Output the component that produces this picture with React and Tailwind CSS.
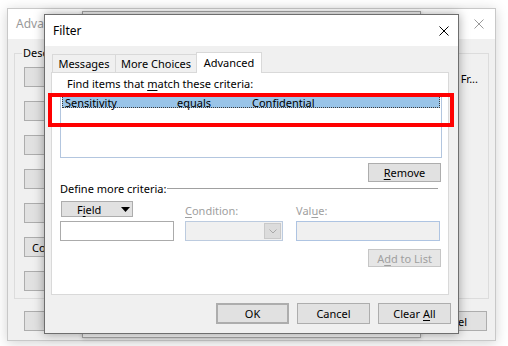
import React from "react"

const CloseX = ({ color = "#000" }) => (
  <svg width="10" height="10" viewBox="0 0 10 10">
    <path d="M0.5 0.5 L9.5 9.5 M9.5 0.5 L0.5 9.5" stroke={color} strokeWidth="1" fill="none" />
  </svg>
)

const Btn = ({ children, className = "" }) => (
  <div
    className={`flex items-center justify-center border border-[#adadad] bg-[#e1e1e1] leading-none ${className}`}
  >
    {children}
  </div>
)

const Tab = ({ label, active, width }) =>
  active ? (
    <div
      className={`relative z-10 -mb-px -ml-px flex h-[21px] items-start justify-center border border-b-0 border-[#d9d9d9] bg-white pt-[2px] ${width}`}
    >
      {label}
    </div>
  ) : (
    <div
      className={`-ml-px flex h-[18px] items-start justify-center border border-b-0 border-[#d9d9d9] bg-[#f0f0f0] pt-[1px] first:ml-0 ${width}`}
    >
      {label}
    </div>
  )

// window in the back, mostly covered by the filter dialog
const BackDialog = () => (
  <div className="absolute left-[7px] top-[8px] flex h-[333px] w-[489px] flex-col border border-[#c8c8c8] bg-[#f0f0f0] shadow-[0_2px_12px_rgba(0,0,0,0.18)]">
    <div className="flex h-[30px] items-center justify-between bg-white pl-[8px] pr-[11px] text-[12px] text-[#9a9a9a]">
      <span>Adva</span>
      <CloseX color="#9a9a9a" />
    </div>
    <div className="flex flex-1 flex-col px-[6px] pt-[14px]">
      <div className="relative flex h-[246px] justify-between border border-[#dcdcdc] pl-[9px] pr-[10px] pt-[13px]">
        <span className="absolute -top-[9px] left-[7px] bg-[#f0f0f0] px-[1px]">Desc</span>
        <div className="flex flex-col gap-[14px]">
          {["", "", "", "", "", "Co", ""].map((t, i) => (
            <Btn key={i} className={`h-[20px] w-[75px] ${t ? "justify-start pl-[7px]" : ""}`}>
              {t}
            </Btn>
          ))}
        </div>
        <div className="pt-[4px]">Fr...</div>
      </div>
      <div className="mt-[12px] flex justify-between pl-[10px] pr-[2px]">
        <Btn className="h-[20px] w-[75px]" />
        <Btn className="h-[20px] w-[75px] justify-end pr-[19px]">el</Btn>
      </div>
    </div>
  </div>
)

const FilterDialog = () => (
  <div className="absolute left-[44px] top-[14px] flex h-[320px] w-[415px] flex-col border border-[#6e6e6e] bg-[#f0f0f0] shadow-[0_0_10px_rgba(0,0,0,0.35)]">
    <div className="flex h-[31px] items-center justify-between bg-white pl-[8px] pr-[9px] text-[12px]">
      <span>Filter</span>
      <CloseX />
    </div>

    <div className="flex flex-1 flex-col px-[6px] pt-[6px]">
      <div className="flex items-end pl-[1px]">
        <Tab label="Messages" width="w-[64px]" />
        <Tab label="More Choices" width="w-[82px]" />
        <Tab label="Advanced" width="w-[66px]" active />
      </div>

      <div className="flex h-[223px] w-[398px] flex-col border border-[#d9d9d9] bg-white pl-[8px] pr-[5px] pt-[3px]">
        <div className="ml-[7px] h-[16px] leading-[16px]">
          Find items that <u className="underline-offset-2">m</u>atch these criteria:
        </div>

        <div className="mt-[2px] h-[64px] w-[382px] border border-[#b3c6df] p-[1px]">
          <div className="flex h-[12px] items-center border border-dotted border-[#3a3a3a] bg-[#99c4e8] pl-[2px] leading-none">
            <span className="w-[112px]">Sensitivity</span>
            <span className="w-[75px]">equals</span>
            <span>Confidential</span>
          </div>
        </div>

        <div className="mt-[5px] flex justify-end pr-[2px]">
          <Btn className="h-[19px] w-[73px]">
            <u className="underline-offset-2">R</u>emove
          </Btn>
        </div>

        <div className="flex h-[12px] items-center">
          <span className="leading-none">Define more criteria:</span>
          <div className="ml-[1px] mr-[5px] h-px flex-1 bg-[#a0a0a0]" />
        </div>

        <div className="mt-[7px] grid grid-cols-[114px_98px_146px] gap-x-[11px]">
          <div className="ml-[1px] flex h-[16px] w-[72px] items-center border border-[#adadad] bg-[#e1e1e1] pl-[15px] pr-[2px] leading-none">
            <span>
              F<u className="underline-offset-2">i</u>eld
            </span>
            <svg className="ml-auto" width="9" height="5" viewBox="0 0 9 5">
              <path d="M0 0 H9 L4.5 5 Z" fill="#000" />
            </svg>
          </div>
          <div className="pt-[2px] leading-[16px] text-[#a0a0a0]">
            <u className="underline-offset-2">C</u>ondition:
          </div>
          <div className="ml-[2px] pt-[2px] leading-[16px] text-[#a0a0a0]">
            Val<u className="underline-offset-2">u</u>e:
          </div>

          <div className="mt-[2px] h-[20px] border border-[#ababab] bg-white" />
          <div className="mt-[2px] flex h-[20px] border border-[#bccbdf] bg-[#f0f0f0] p-px">
            <div className="flex-1" />
            <div className="flex w-[17px] items-center justify-center border border-[#c9c9c9] bg-[#dcdcdc]">
              <svg width="8" height="5" viewBox="0 0 8 5">
                <path d="M0.5 0.5 L4 4 L7.5 0.5" stroke="#a8a8a8" fill="none" />
              </svg>
            </div>
          </div>
          <div className="ml-[2px] mt-[2px] h-[20px] border border-[#aec4e2] bg-[#f0f0f0]" />
        </div>

        <div className="mt-[8px] flex justify-end pr-[2px]">
          <Btn className="h-[18px] w-[73px] border-[#c6c6c6] bg-[#e6e6e6] text-[#a0a0a0]">
            A<u className="underline-offset-2">d</u>d to List
          </Btn>
        </div>
      </div>

      <div className="mt-[8px] flex justify-end gap-[8px] pr-[1px]">
        <Btn className="h-[21px] w-[73px] border-2 border-[#0078d7]">OK</Btn>
        <Btn className="h-[21px] w-[73px]">Cancel</Btn>
        <Btn className="h-[21px] w-[73px]">
          Clear <u className="ml-[3px] underline-offset-2">A</u>ll
        </Btn>
      </div>
    </div>
  </div>
)

export default function App() {
  return (
    <div className="relative h-[346px] w-[508px] overflow-hidden bg-white font-['Noto_Sans',sans-serif] text-[11px] text-black">
      <BackDialog />
      <div className="absolute left-[82px] top-[11px] h-[327px] w-[339px] border border-[#a3a3a3] bg-[#f0f0f0] shadow-[0_1px_4px_rgba(0,0,0,0.2)]" />
      <FilterDialog />
      {/* red highlight drawn over the criteria list */}
      <div className="pointer-events-none absolute left-[48px] top-[93px] z-20 h-[34px] w-[406px] border-4 border-[#ff0000]" />
    </div>
  )
}
